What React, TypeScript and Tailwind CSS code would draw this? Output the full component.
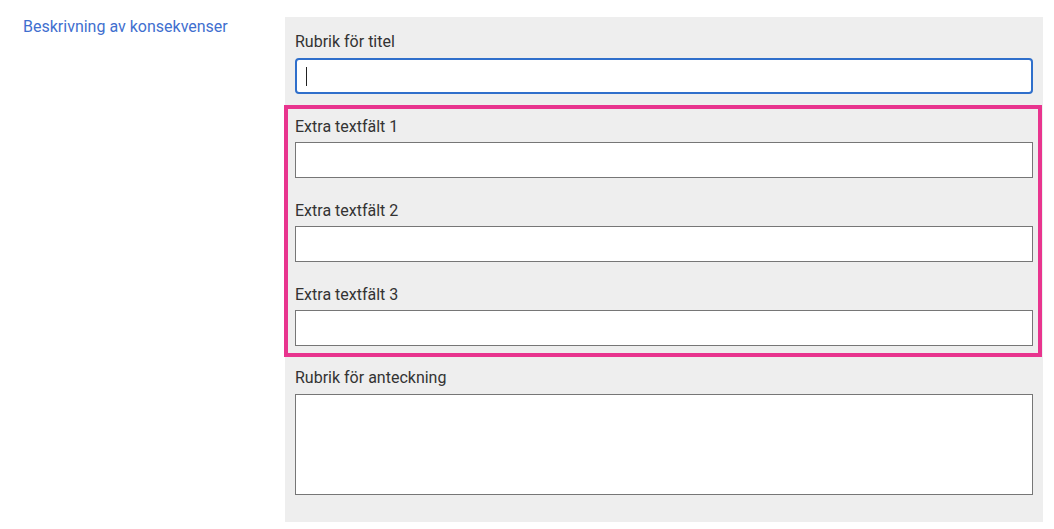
function Field({ label, first }: { label: string; first?: boolean }) {
  return (
    <div className={first ? '' : 'mt-[23px]'}>
      <div className="text-[16px] leading-[20px] text-[#333]">{label}</div>
      <div className="mt-[5px] h-[36px] border border-[#767676] bg-white" />
    </div>
  );
}

export default function App() {
  return (
    <div
      className="flex min-h-screen bg-white"
      style={{ fontFamily: 'Roboto, "Liberation Sans", sans-serif' }}
    >
      <div className="w-[285px] shrink-0 pl-[23px] pt-[17px]">
        <div className="text-[16px] leading-[20px] text-[#3f6fcf]">Beskrivning av konsekvenser</div>
      </div>

      <div className="mt-[17px] mb-[7px] w-[758px] bg-[#eeeeee] px-[10px] pt-[15px] pb-[27px]">
        <div className="text-[16px] leading-[20px] text-[#333]">Rubrik för titel</div>
        <div className="mt-[6px] flex h-[36px] items-center rounded-[4px] border-2 border-[#2f6fcb] bg-white pl-[9px]">
          <span className="h-[19px] w-px bg-[#222]" />
        </div>

        <div className="mt-[11px] -ml-[11px] -mr-[9px] border-4 border-[#e8348e] pl-[7px] pr-[5px] pt-[8px] pb-[7px]">
          <Field label="Extra textfält 1" first />
          <Field label="Extra textfält 2" />
          <Field label="Extra textfält 3" />
        </div>

        <div className="mt-[11px] text-[16px] leading-[20px] text-[#333]">Rubrik för anteckning</div>
        <div className="mt-[6px] h-[101px] border border-[#767676] bg-white" />
      </div>
    </div>
  );
}
